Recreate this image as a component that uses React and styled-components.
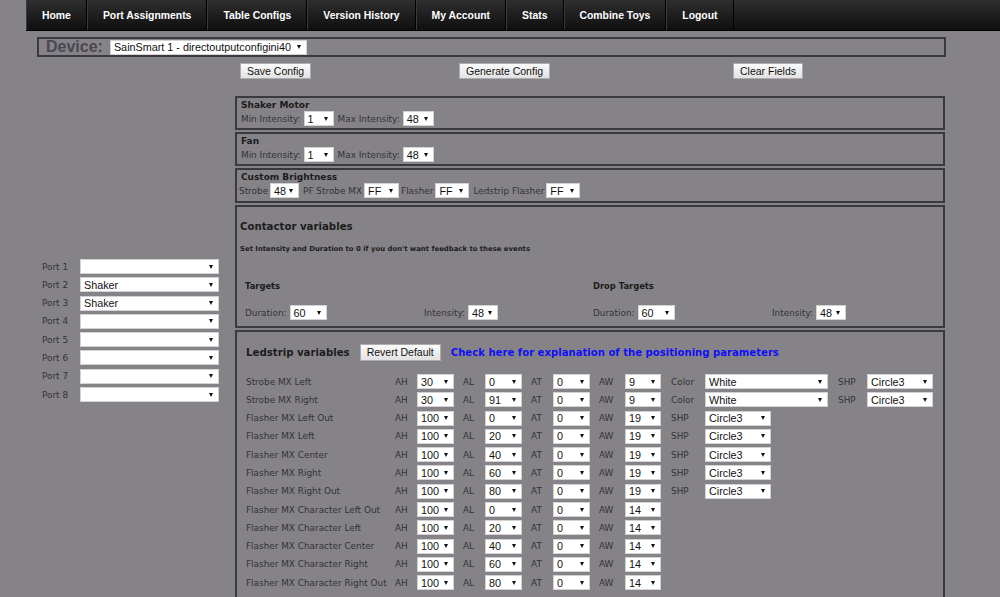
import React from "react";
import styled, { createGlobalStyle } from "styled-components";

const Global = createGlobalStyle`
  html, body { margin: 0; padding: 0; }
  body {
    background: #858387;
    font-family: "DejaVu Sans", Verdana, sans-serif;
    min-height: 100vh;
  }
`;

const Nav = styled.nav`
  margin-left: 26px;
  height: 31px;
  display: flex;
  background: linear-gradient(#2e2e2e, #0f0f0f);
  border-bottom: 1px solid #000;
  box-sizing: border-box;
`;

const NavItem = styled.a`
  display: block;
  padding: 0 15px;
  line-height: 31px;
  font-family: "Liberation Sans", Arial, sans-serif;
  font-weight: bold;
  font-size: 10.4px;
  color: #fff;
  text-decoration: none;
  border-left: 1px solid #3a3a3a;
  border-right: 1px solid #000;
  white-space: nowrap;
`;

const DeviceBox = styled.div`
  margin: 6px 54px 0 37px;
  height: 20px;
  box-sizing: border-box;
  border: 2px solid #3b3a3e;
  display: flex;
  align-items: center;
  padding-left: 7px;
  gap: 7px;
`;

const DeviceLabel = styled.span`
  font-family: "Liberation Sans", Arial, sans-serif;
  font-weight: bold;
  font-size: 16px;
  line-height: 16px;
  color: #4a4752;
`;

const SelectBox = styled.div`
  display: flex;
  align-items: center;
  box-sizing: border-box;
  width: ${(p) => (p.$w ? `${p.$w}px` : "auto")};
  height: 15px;
  background: #fff;
  border: 1px solid #d2d2d2;
  padding: 0 5px 0 3px;
  font-family: "Liberation Sans", Arial, sans-serif;
  font-size: 10.8px;
  color: #111;
  white-space: nowrap;
  overflow: hidden;
  flex: none;
`;

const Arrow = styled.span`
  flex: none;
  margin-left: ${(p) => (p.$tight ? "6px" : "auto")};
  width: 0;
  height: 0;
  border-left: 2.5px solid transparent;
  border-right: 2.5px solid transparent;
  border-top: 4px solid #111;
`;

const Select = ({ w, value, tight }) => (
  <SelectBox $w={w}>
    <span>{value}</span>
    <Arrow $tight={tight} />
  </SelectBox>
);

const Toolbar = styled.div`
  margin-top: 6px;
  padding-left: 240px;
  display: grid;
  grid-template-columns: 219px 274px 1fr;
  justify-items: start;
`;

const Button = styled.button`
  height: ${(p) => (p.$h ? `${p.$h}px` : "16px")};
  padding: 0 6px;
  margin: 0;
  background: linear-gradient(#fbfbfb, #e2e2e2);
  border: 1px solid #adadad;
  border-radius: 0;
  font-family: "Liberation Sans", Arial, sans-serif;
  font-size: 10.5px;
  color: #111;
  line-height: 1;
  white-space: nowrap;
`;

const Main = styled.div`
  margin-top: 17px;
  display: flex;
  align-items: flex-start;
`;

const PortCol = styled.div`
  width: 235px;
  box-sizing: border-box;
  padding: 163px 0 0 42px;
  display: flex;
  flex-direction: column;
  gap: 3.3px;
`;

const PortRow = styled.div`
  display: flex;
  align-items: center;
  height: 15px;
`;

const Label = styled.span`
  font-family: "DejaVu Sans", Verdana, sans-serif;
  font-size: 8.9px;
  color: #333;
  white-space: nowrap;
  width: ${(p) => (p.$w ? `${p.$w}px` : "auto")};
  flex: none;
`;

const PanelCol = styled.div`
  width: 710px;
  display: flex;
  flex-direction: column;
  gap: 2px;
`;

const Panel = styled.section`
  box-sizing: border-box;
  border: 2px solid #3a393d;
  padding: ${(p) => p.$pad || "1px 4px 2px 4px"};
`;

const SmallHead = styled.div`
  font-family: "DejaVu Sans", Verdana, sans-serif;
  font-weight: bold;
  font-size: 9px;
  line-height: 12px;
  color: #1c1c1c;
`;

const InlineRow = styled.div`
  display: flex;
  align-items: center;
  gap: ${(p) => p.$gap || 3}px;
  height: 15px;
`;

const BigHead = styled.div`
  font-family: "DejaVu Sans", Verdana, sans-serif;
  font-weight: bold;
  font-size: 10.2px;
  line-height: 14px;
  color: #1c1c1c;
  margin-top: ${(p) => p.$mt || 0}px;
  white-space: nowrap;
`;

const Note = styled.div`
  font-family: "DejaVu Sans", Verdana, sans-serif;
  font-weight: bold;
  font-size: 6.9px;
  line-height: 10px;
  color: #1c1c1c;
  margin-top: 10px;
  white-space: nowrap;
`;

const ContactGrid = styled.div`
  display: grid;
  grid-template-columns: 179px 169px 179px 1fr;
  margin: 25px 0 0 5px;
  row-gap: 12px;
`;

const SubHead = styled.div`
  font-family: "DejaVu Sans", Verdana, sans-serif;
  font-weight: bold;
  font-size: 8.4px;
  line-height: 14px;
  color: #1c1c1c;
  grid-column: ${(p) => p.$col} / span 2;
`;

const LedHeader = styled.div`
  display: flex;
  align-items: center;
  gap: 10px;
  margin: 12px 0 0 5px;
  height: 17px;
`;

const Link = styled.a`
  font-family: "DejaVu Sans", Verdana, sans-serif;
  font-weight: bold;
  font-size: 10.1px;
  color: #1010f5;
  text-decoration: none;
  white-space: nowrap;
`;

const LedGrid = styled.div`
  display: grid;
  grid-template-columns: 149px 22px 46px 22px 46px 22px 46px 26px 46px 34px 133px 29px auto;
  grid-auto-rows: 15px;
  row-gap: 3.3px;
  align-items: center;
  margin: 13px 0 0 5px;
`;

const Spacer = styled.span`
  grid-column: span ${(p) => p.$span};
`;

const ports = ["", "Shaker", "Shaker", "", "", "", "", ""];

const led = [
  ["Strobe MX Left", 30, 0, 0, 9, "color"],
  ["Strobe MX Right", 30, 91, 0, 9, "color"],
  ["Flasher MX Left Out", 100, 0, 0, 19, "shp"],
  ["Flasher MX Left", 100, 20, 0, 19, "shp"],
  ["Flasher MX Center", 100, 40, 0, 19, "shp"],
  ["Flasher MX Right", 100, 60, 0, 19, "shp"],
  ["Flasher MX Right Out", 100, 80, 0, 19, "shp"],
  ["Flasher MX Character Left Out", 100, 0, 0, 14],
  ["Flasher MX Character Left", 100, 20, 0, 14],
  ["Flasher MX Character Center", 100, 40, 0, 14],
  ["Flasher MX Character Right", 100, 60, 0, 14],
  ["Flasher MX Character Right Out", 100, 80, 0, 14],
];

const navItems = [
  "Home",
  "Port Assignments",
  "Table Configs",
  "Version History",
  "My Account",
  "Stats",
  "Combine Toys",
  "Logout",
];

const IntensityPanel = ({ title }) => (
  <Panel>
    <SmallHead>{title}</SmallHead>
    <InlineRow>
      <Label>Min Intensity:</Label>
      <Select w={30} value="1" />
      <Label style={{ marginLeft: 1 }}>Max Intensity:</Label>
      <Select w={31} value="48" />
    </InlineRow>
  </Panel>
);

export default function App() {
  return (
    <>
      <Global />
      <Nav>
        {navItems.map((n) => (
          <NavItem key={n} href="#">
            {n}
          </NavItem>
        ))}
      </Nav>
      <DeviceBox>
        <DeviceLabel>Device:</DeviceLabel>
        <Select value="SainSmart 1 - directoutputconfigini40" tight />
      </DeviceBox>
      <Toolbar>
        <Button>Save Config</Button>
        <Button>Generate Config</Button>
        <Button>Clear Fields</Button>
      </Toolbar>
      <Main>
        <PortCol>
          {ports.map((v, i) => (
            <PortRow key={i}>
              <Label $w={38}>Port {i + 1}</Label>
              <Select w={139} value={v} />
            </PortRow>
          ))}
        </PortCol>
        <PanelCol>
          <IntensityPanel title="Shaker Motor" />
          <IntensityPanel title="Fan" />
          <Panel $pad="1px 4px 3px 2px">
            <SmallHead style={{ paddingLeft: 2 }}>Custom Brightness</SmallHead>
            <InlineRow $gap={2}>
              <Label>Strobe</Label>
              <Select w={29} value="48" />
              <Label style={{ marginLeft: 2 }}>PF Strobe MX</Label>
              <Select w={35} value="FF" />
              <Label>Flasher</Label>
              <Select w={34} value="FF" />
              <Label style={{ marginLeft: 2 }}>Ledstrip Flasher</Label>
              <Select w={34} value="FF" />
            </InlineRow>
          </Panel>
          <Panel $pad="0 4px 6px 3px">
            <BigHead $mt={13}>Contactor variables</BigHead>
            <Note>Set Intensity and Duration to 0 if you don't want feedback to these events</Note>
            <ContactGrid>
              <SubHead $col={1}>Targets</SubHead>
              <SubHead $col={3}>Drop Targets</SubHead>
              <InlineRow>
                <Label>Duration:</Label>
                <Select w={37} value="60" />
              </InlineRow>
              <InlineRow>
                <Label>Intensity:</Label>
                <Select w={30} value="48" />
              </InlineRow>
              <InlineRow>
                <Label>Duration:</Label>
                <Select w={37} value="60" />
              </InlineRow>
              <InlineRow>
                <Label>Intensity:</Label>
                <Select w={30} value="48" />
              </InlineRow>
            </ContactGrid>
          </Panel>
          <Panel $pad="0 4px 10px 4px">
            <LedHeader>
              <BigHead>Ledstrip variables</BigHead>
              <Button $h={17}>Revert Default</Button>
              <Link href="#">Check here for explanation of the positioning parameters</Link>
            </LedHeader>
            <LedGrid>
              {led.map(([name, ah, al, at, aw, extra]) => (
                <React.Fragment key={name}>
                  <Label>{name}</Label>
                  <Label>AH</Label>
                  <Select w={37} value={ah} />
                  <Label>AL</Label>
                  <Select w={37} value={al} />
                  <Label>AT</Label>
                  <Select w={37} value={at} />
                  <Label>AW</Label>
                  <Select w={36} value={aw} />
                  {extra === "color" && (
                    <>
                      <Label>Color</Label>
                      <Select w={123} value="White" />
                      <Label>SHP</Label>
                      <Select w={66} value="Circle3" />
                    </>
                  )}
                  {extra === "shp" && (
                    <>
                      <Label>SHP</Label>
                      <Select w={66} value="Circle3" />
                      <Spacer $span={2} />
                    </>
                  )}
                  {!extra && <Spacer $span={4} />}
                </React.Fragment>
              ))}
            </LedGrid>
          </Panel>
        </PanelCol>
      </Main>
    </>
  );
}
